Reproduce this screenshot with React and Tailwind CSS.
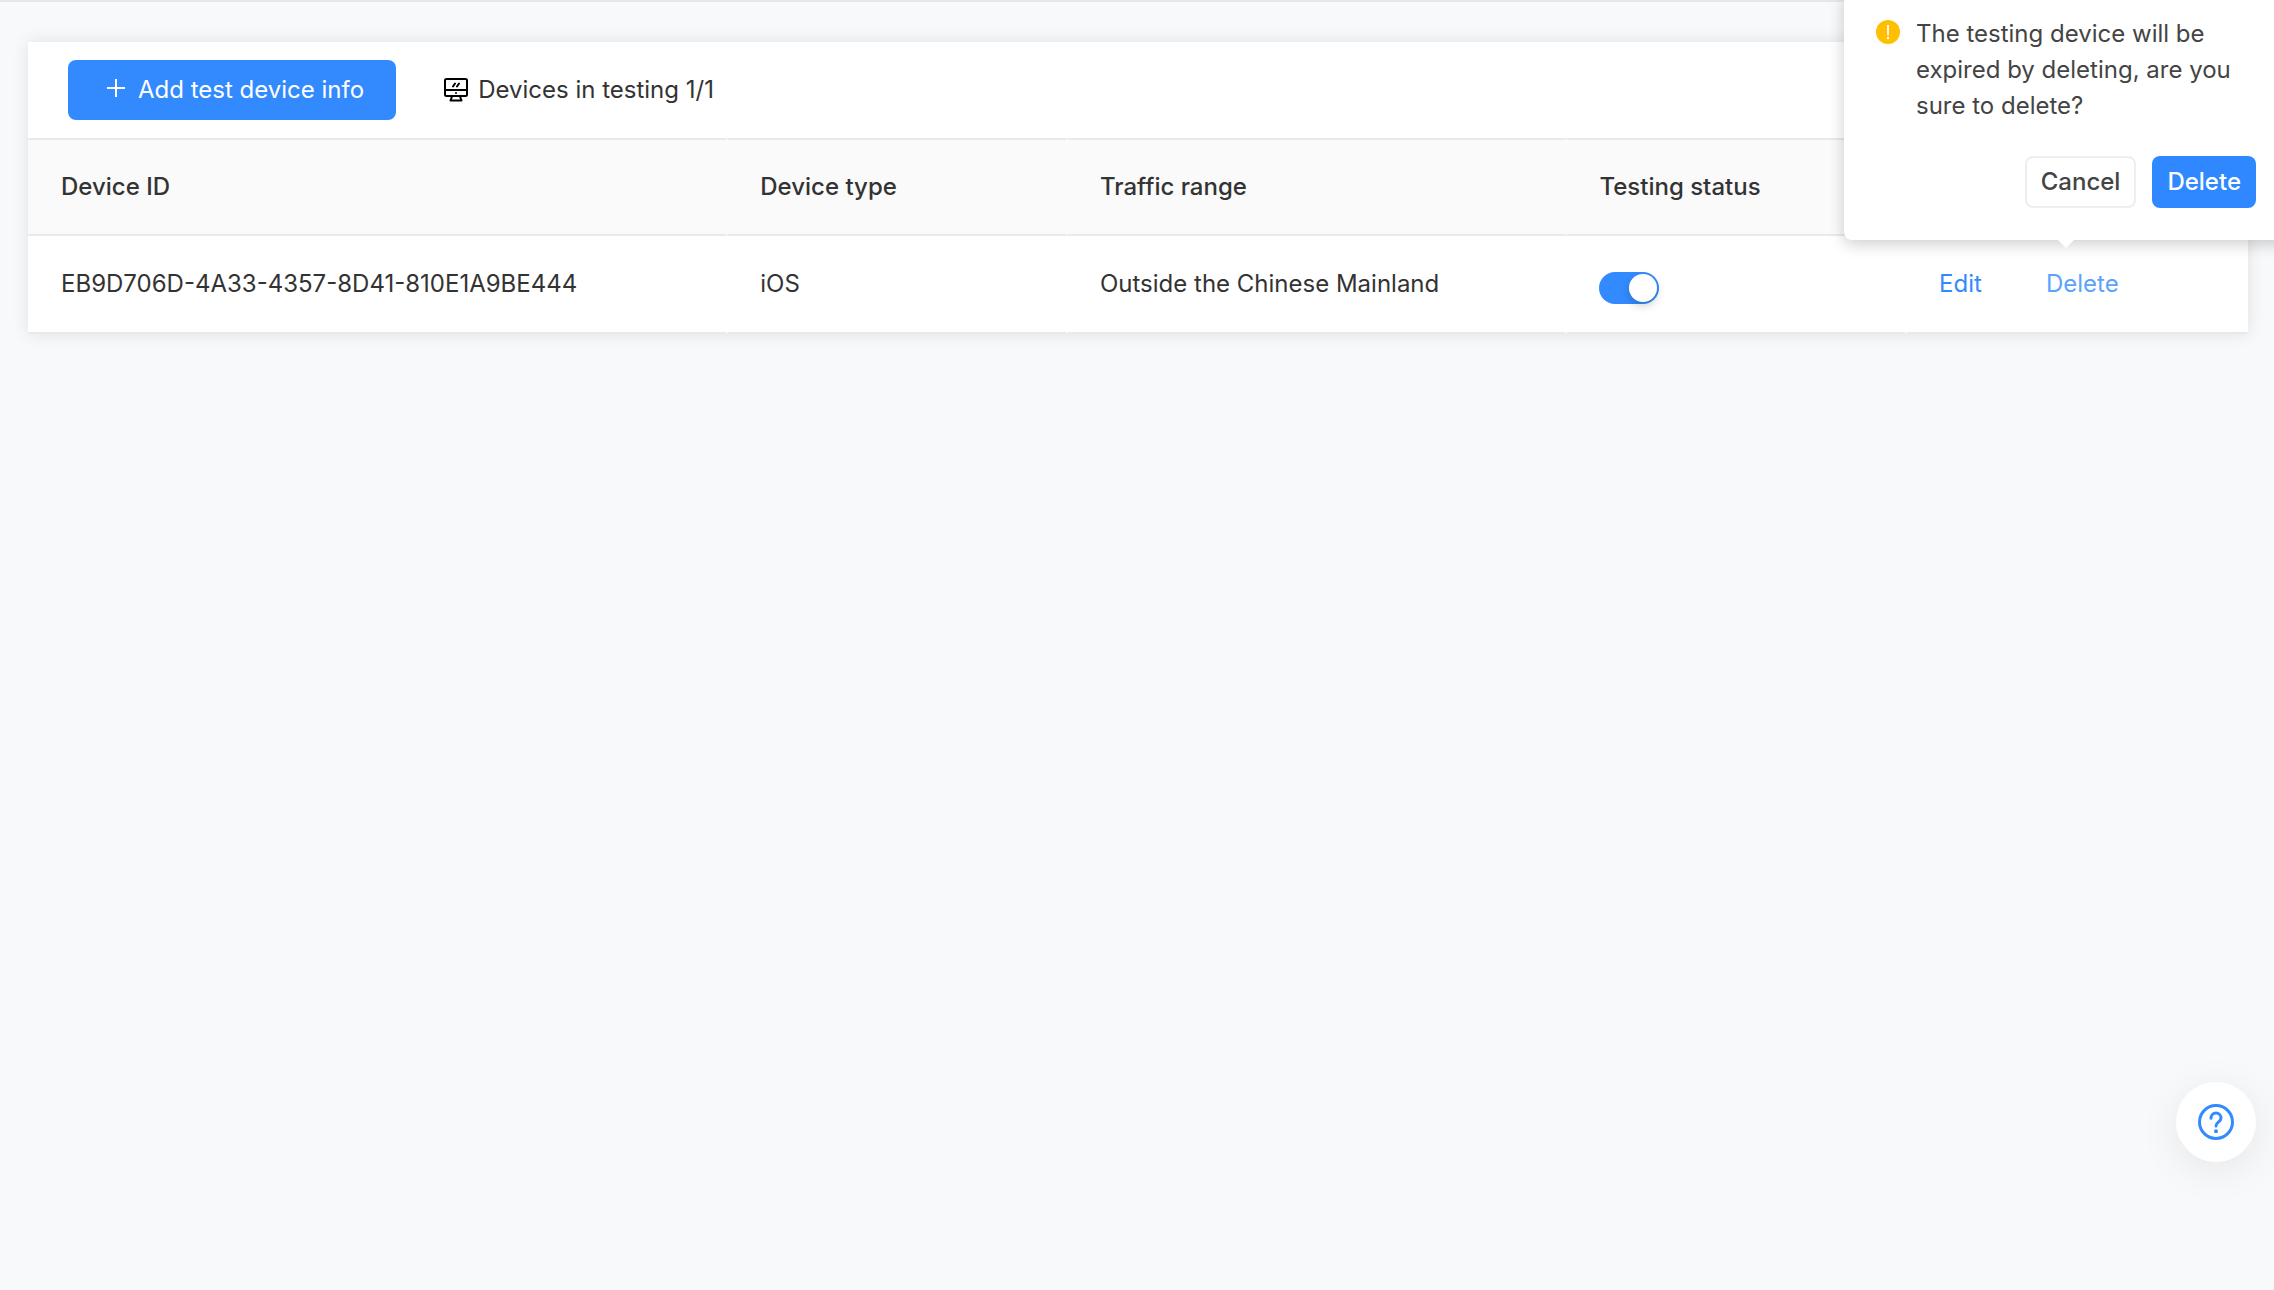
// src/App.jsx
import React, { useState } from 'react';

const devices = [
  {
    id: 'EB9D706D-4A33-4357-8D41-810E1A9BE444',
    type: 'iOS',
    range: 'Outside the Chinese Mainland',
  },
];

const PlusIcon = () => (
  <svg className="w-6 h-6" viewBox="0 0 24 24" fill="none" stroke="currentColor" strokeWidth="2">
    <path d="M12 1v18M3 10h18" />
  </svg>
);

const MonitorIcon = () => (
  <svg
    className="w-6 h-6 text-black"
    viewBox="0 0 24 24"
    fill="none"
    stroke="currentColor"
    strokeWidth="2"
    strokeLinejoin="round"
    strokeLinecap="round"
  >
    <rect x="1" y="1" width="22" height="17" rx="1.5" />
    <path d="M1 12h22M8 18.500l-1.500 4h11l-1.500-4" />
    <path d="M9 8.500l2-3M13 8.500l2-3" />
    <path d="M12 15h.01" />
  </svg>
);

const WarningIcon = () => (
  <svg className="w-6 h-6 shrink-0" viewBox="0 0 24 24">
    <circle cx="12" cy="12" r="12" fill="#ffbf00" />
    <path d="M11 5h2l-.2 10.500h-1.600z" fill="#fff" />
    <circle cx="12" cy="18" r="1.2" fill="#fff" />
  </svg>
);

const HelpIcon = () => (
  <svg className="w-9 h-9" viewBox="0 0 36 36" fill="none" stroke="#338aff" strokeWidth="3" strokeLinecap="round">
    <circle cx="18" cy="18" r="16.5" />
    <path d="M13 14.300c0-3 2.200-5.300 5-5.300s5 2.200 5 5c0 4-5 3.800-5 8" />
    <circle cx="18" cy="27.300" r="2" fill="#338aff" stroke="none" />
  </svg>
);

const Toggle = ({ checked, onChange }) => (
  <label className="relative block w-15 h-8 mt-2">
    <input
      type="checkbox"
      role="switch"
      aria-label="Testing status"
      checked={checked}
      onChange={onChange}
      className="peer appearance-none block w-15 h-8 rounded-full bg-[#bfbfbf] checked:bg-[#338aff] cursor-pointer"
    />
    <span className="absolute top-0.5 left-0.5 w-7 h-7 rounded-full bg-white shadow-[0_4px_8px_rgba(0,35,11,0.2)] pointer-events-none peer-checked:left-auto peer-checked:right-0.5" />
  </label>
);

const DeletePopover = () => (
  <div
    role="dialog"
    aria-label="Delete device"
    className="absolute -top-2 -right-3.5 w-111 bg-white rounded-lg px-8 pt-6 pb-8 z-10 text-[#444] shadow-[0_4px_16px_rgba(0,0,0,0.2)]"
  >
    <div className="flex gap-4">
      <div className="pt-1">
        <WarningIcon />
      </div>
      <p className="leading-9">The testing device will be expired by deleting, are you sure to delete?</p>
    </div>
    <div className="flex justify-end gap-4 mt-8">
      <button type="button" className="h-13 px-3.5 border-2 border-[#eee] rounded-lg font-medium">
        Cancel
      </button>
      <button type="button" className="h-13 px-[15px] rounded-lg bg-[#2f88ff] text-white font-medium">
        Delete
      </button>
    </div>
    {/* Arrow */}
    <div className="absolute top-full left-1/2 -translate-x-1/2 border-x-8 border-t-8 border-x-transparent border-t-white" />
  </div>
);

const cell = 'h-[98px] px-8 border-b-2 border-b-[#e9e9e9] border-x border-x-transparent text-left';

const App = () => {
  const [testing, setTesting] = useState(true);

  return (
    <div className="relative min-h-screen overflow-hidden bg-[#f8f9fb] font-['Inter','Liberation_Sans',sans-serif] text-2xl text-[#333]">
      <div className="h-0.5 bg-[#e3e8ee]" />

      <main className="mt-10 ml-7 mr-6.5 bg-white shadow-[0_0_16px_rgba(0,0,0,0.1)]">
        <div className="flex items-center h-24 px-10">
          <button type="button" className="flex items-center gap-2.5 h-15 pl-9 pr-8 rounded-lg bg-[#338aff] text-white">
            <PlusIcon />
            Add test device info
          </button>
          <div className="flex items-center gap-2.5 ml-12">
            <MonitorIcon />
            <span>Devices in testing 1/1</span>
          </div>
        </div>

        <table className="w-full table-fixed border-separate border-spacing-0">
          <colgroup>
            <col className="w-[31.5%]" />
            <col className="w-[15.3%]" />
            <col className="w-[22.5%]" />
            <col className="w-[15.3%]" />
            <col />
          </colgroup>
          <thead>
            <tr className="bg-[#fafafa]">
              {['Device ID', 'Device type', 'Traffic range', 'Testing status', ''].map((title, i) => (
                <th key={i} className={`${cell} border-t-2 border-t-[#e9e9e9] font-medium`}>
                  {title}
                </th>
              ))}
            </tr>
          </thead>
          <tbody>
            {devices.map((device) => (
              <tr key={device.id}>
                <td className={cell}>{device.id}</td>
                <td className={cell}>{device.type}</td>
                <td className={cell}>{device.range}</td>
                <td className={cell}>
                  <Toggle checked={testing} onChange={() => setTesting(!testing)} />
                </td>
                <td className={cell}>
                  <div className="flex gap-16 text-[#338aff]">
                    <a href="#edit">Edit</a>
                    <a href="#delete" className="text-[#5ca2ff]">Delete</a>
                  </div>
                </td>
              </tr>
            ))}
          </tbody>
        </table>
      </main>

      <DeletePopover />

      {/* Help button */}
      <button
        type="button"
        aria-label="Help"
        className="fixed bottom-32 right-4.5 flex items-center justify-center w-20 h-20 rounded-full bg-white shadow-[0_8px_40px_rgba(0,0,0,0.08)]"
      >
        <HelpIcon />
      </button>
    </div>
  );
};

export default App;
